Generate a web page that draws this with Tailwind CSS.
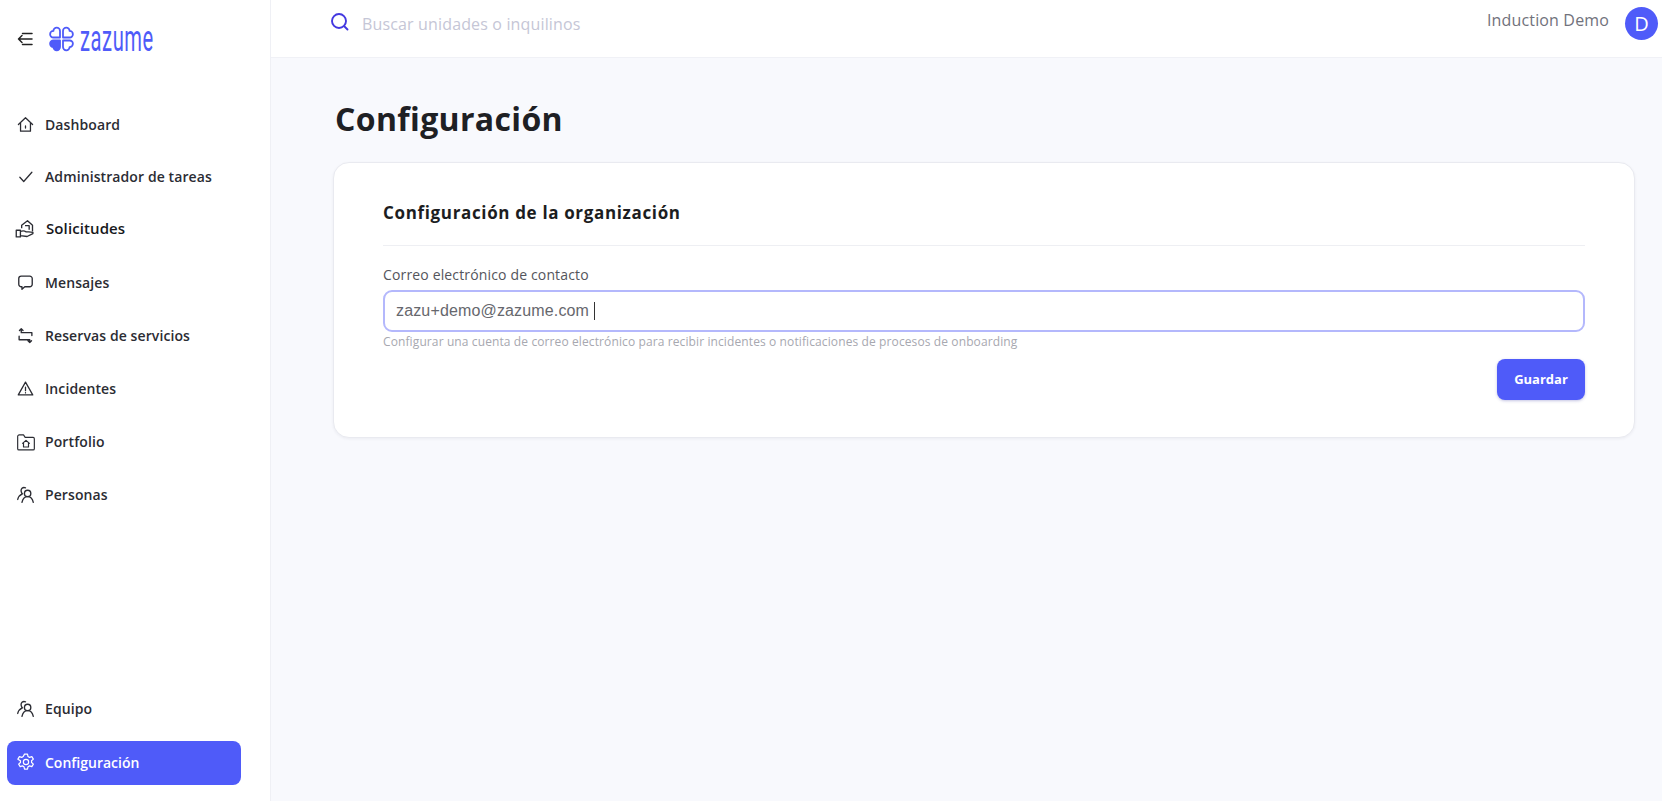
<!DOCTYPE html>
<html lang="es">
<head>
    <meta charset="UTF-8">
    <meta name="viewport" content="width=device-width, initial-scale=1.0">
    <title>Configuración</title>
    <script src="https://cdn.jsdelivr.net/npm/@tailwindcss/browser@4"></script>
</head>
<body class="flex h-[801px] overflow-hidden bg-[#f8f9fd] font-['Open_Sans',sans-serif] text-[#1f2024]">
    <!-- sidebar -->
    <aside class="flex h-full w-[271px] shrink-0 flex-col border-r border-[#eff0f5] bg-white pb-[16px]">
        <div class="flex h-[78px] items-center pl-[17px]">
            <svg class="h-[16px] w-[16px]" viewBox="0 0 16 16" fill="none" stroke="#222" stroke-width="1.500" stroke-linecap="round" stroke-linejoin="round">
                <path d="M5.500 2.500h9.500M1.500 8h13.500M5.500 13.500h9.500M5 4.500 1.500 8 5 11.500"/>
            </svg>
            <svg class="ml-[15px] h-[28px] w-[27px]" viewBox="0 0 27 28" fill="none" stroke="#4f5bf9" stroke-width="1.800" stroke-linejoin="round">
                <path d="M12 12.500H5.400a3.300 3.300 0 0 1 0-6.600 3.300 3.300 0 0 1 6.600 0z"/>
                <path d="M12 12.500H5.400a3.300 3.300 0 0 1 0-6.600 3.300 3.300 0 0 1 6.600 0z" transform="matrix(-1 0 0 1 27 0)"/>
                <path d="M12 12.500H5.400a3.300 3.300 0 0 1 0-6.600 3.300 3.300 0 0 1 6.600 0z" transform="matrix(-1 0 0 -1 27 28)"/>
                <path fill="#4f5bf9" d="M12 12.500H5.400a3.300 3.300 0 0 1 0-6.600 3.300 3.300 0 0 1 6.600 0z" transform="matrix(1 0 0 -1 0 28)"/>
            </svg>
            <span class="ml-[5px] origin-left scale-x-[0.56] font-['Roboto',sans-serif] text-[36px] leading-none tracking-[1px] text-[#4f5bf9]">zazume</span>
        </div>
        <nav class="mt-[19px] flex flex-col text-[14px] font-[560] tracking-[0.1px] text-[#2b2c33]">
            <a class="flex h-[53px] items-center gap-[11px] pt-[1px] pl-[17px]" href="#">
                <svg class="h-[17px] w-[17px]" viewBox="0 0 24 24" fill="none" stroke="#2b2c33" stroke-width="1.800" stroke-linejoin="round" stroke-linecap="round"><path d="M2 12 12 2.500 22 12M5 9.500V21.500h14V9.500M12 14v3"/></svg>
                <span>Dashboard</span>
            </a>
            <a class="flex h-[53px] items-center gap-[11px] pl-[17px]" href="#">
                <svg class="h-[17px] w-[17px]" viewBox="0 0 24 24" fill="none" stroke="#2b2c33" stroke-width="1.800" stroke-linecap="round" stroke-linejoin="round"><path d="m4 13 5.500 6L21 6"/></svg>
                <span>Administrador de tareas</span>
            </a>
            <a class="flex h-[53px] items-center gap-[11px] pb-[2px] pl-[15px] text-[15px] text-[#17181c]" href="#">
                <svg class="h-[20px] w-[20px]" viewBox="0 0 24 24" fill="none" stroke="#2b2c33" stroke-width="1.600" stroke-linejoin="round"><path d="M8 11V7.500L15 2l6 5.500V15M12 8h5v5"/><path d="M1.500 13.500h5v8h-5zM6.500 15c3-1.500 5-1 7 .5h3l5 .5v1.500l-7 3.500-8-1"/></svg>
                <span>Solicitudes</span>
            </a>
            <a class="flex h-[53px] items-center gap-[11px] pl-[17px]" href="#">
                <svg class="h-[17px] w-[17px]" viewBox="0 0 24 24" fill="none" stroke="#2b2c33" stroke-width="1.900" stroke-linejoin="round"><path d="M6 3h12a3.500 3.500 0 0 1 3.500 3.500v8A3.500 3.500 0 0 1 18 18h-7l-4 3.500V18H6a3.500 3.500 0 0 1-3.500-3.500v-8A3.500 3.500 0 0 1 6 3z"/></svg>
                <span>Mensajes</span>
            </a>
            <a class="flex h-[53px] items-center gap-[11px] pl-[17px]" href="#">
                <svg class="h-[17px] w-[17px]" viewBox="0 0 24 24" fill="none" stroke="#2b2c33" stroke-width="1.900" stroke-linecap="round" stroke-linejoin="round"><path d="M6 2.500V8h15v4M3.500 5 6 2.500 8.500 5M3 13v5h15v4M15.500 19.500 18 22l2.500-2.500"/></svg>
                <span>Reservas de servicios</span>
            </a>
            <a class="flex h-[53px] items-center gap-[11px] pl-[17px]" href="#">
                <svg class="h-[17px] w-[17px]" viewBox="0 0 24 24" fill="none" stroke="#2b2c33" stroke-width="1.800" stroke-linecap="round" stroke-linejoin="round"><path d="M12 3 1.800 21h20.400zM12 10v5M12 18v.2"/></svg>
                <span>Incidentes</span>
            </a>
            <a class="flex h-[53px] items-center gap-[9px] pl-[16px]" href="#">
                <svg class="h-[20px] w-[20px]" viewBox="0 0 24 24" fill="none" stroke="#2b2c33" stroke-width="1.400" stroke-linejoin="round"><path d="M2 5.500A2 2 0 0 1 4 3.500h5l2 3h9.500a1.500 1.500 0 0 1 1.500 1.500v12a1.500 1.500 0 0 1-1.500 1.500h-17A1.500 1.500 0 0 1 2 20z"/><path d="m7.500 14 4.500-4 4.500 4M9 13v5h6v-5"/></svg>
                <span>Portfolio</span>
            </a>
            <a class="flex h-[53px] items-center gap-[11px] pl-[17px]" href="#">
                <svg class="h-[17px] w-[17px]" viewBox="0 0 24 24" fill="none" stroke="#2b2c33" stroke-width="1.900" stroke-linecap="round"><circle cx="15" cy="10.500" r="4.500"/><path d="M7 23c1-4.500 4-8 8-8s7 3.500 8 8M12 2.500C8 1 5 4 6 8c.3 1.500 1 2.500 1.500 3C4 12.500 2 15 1 19"/></svg>
                <span>Personas</span>
            </a>
        </nav>
        <div class="mt-auto flex flex-col text-[14px] font-[560] tracking-[0.1px] text-[#2b2c33]">
            <a class="mb-[10px] flex h-[44px] items-center gap-[11px] pb-[2px] pl-[17px]" href="#">
                <svg class="h-[17px] w-[17px]" viewBox="0 0 24 24" fill="none" stroke="#2b2c33" stroke-width="1.900" stroke-linecap="round"><circle cx="15" cy="10.500" r="4.500"/><path d="M7 23c1-4.500 4-8 8-8s7 3.500 8 8M12 2.500C8 1 5 4 6 8c.3 1.500 1 2.500 1.500 3C4 12.500 2 15 1 19"/></svg>
                <span>Equipo</span>
            </a>
            <a class="mx-[7px] flex h-[44px] w-[234px] items-center gap-[10px] rounded-[8px] bg-[#4f5bf9] pb-[2px] pl-[10px] font-semibold tracking-normal text-white" href="#">
                <svg class="h-[18px] w-[18px]" viewBox="0 0 24 24" fill="none" stroke="#fff" stroke-width="1.600" stroke-linejoin="round"><circle cx="12" cy="12" r="3.500"/><path d="M10 1.500h4l.7 3.200 2 1.100 3.100-1 2 3.400-2.400 2.200v2.200l2.400 2.200-2 3.400-3.100-1-2 1.100-.7 3.200h-4l-.7-3.200-2-1.100-3.100 1-2-3.400 2.400-2.200v-2.200L1.200 8.200l2-3.400 3.100 1 2-1.100z"/></svg>
                <span>Configuración</span>
            </a>
        </div>
    </aside>

    <div class="flex min-w-0 flex-1 flex-col">
        <!-- top bar -->
        <header class="flex h-[58px] shrink-0 items-start border-b border-[#f0f1f6] bg-white pr-[4px] pl-[59px]">
            <svg class="mt-[12px] h-[20px] w-[20px]" viewBox="0 0 20 20" fill="none" stroke="#4338e0" stroke-width="1.900" stroke-linecap="round"><circle cx="9" cy="9" r="7"/><path d="m14.500 14.500 3 3"/></svg>
            <span class="mt-[13px] ml-[12px] text-[16px] leading-[22px] tracking-[0.15px] text-[#c5c6d6]">Buscar unidades o inquilinos</span>
            <span class="mt-[9px] ml-auto text-[16px] leading-[22px] tracking-[0.15px] text-[#71727c]">Induction Demo</span>
            <span class="mt-[7px] ml-[16px] flex h-[33px] w-[33px] items-center justify-center rounded-full bg-[#4f5bf9] text-[20px] text-white">D</span>
        </header>

        <!-- content -->
        <main class="pt-[39px] pr-[27px] pl-[62px]">
            <h1 class="ml-[2px] text-[32px] leading-[44px] font-bold tracking-[0.35px] text-[#1e2024]">Configuración</h1>
            <section class="mt-[21px] h-[276px] rounded-[16px] border border-[#e9eaf0] bg-white px-[49px] pt-[38px] shadow-[0_1px_3px_rgba(30,30,60,0.06)]">
                <h2 class="border-b border-[#eeeff3] pb-[20px] text-[17px] leading-[24px] font-bold tracking-[0.65px] text-[#1c1d21]">Configuración de la organización</h2>
                <p class="mt-[19px] text-[14px] leading-[20px] tracking-[0.15px] text-[#54555c]">Correo electrónico de contacto</p>
                <div class="mt-[5px] flex h-[42px] items-center rounded-[9px] border-2 border-[#b4b8fc] pl-[11px] font-['Liberation_Sans',sans-serif] text-[16px] tracking-[0.15px] text-[#66676d]">
                    <span>zazu+demo@zazume.com</span>
                    <span class="ml-[5px] h-[18px] w-px bg-[#333]"></span>
                </div>
                <p class="mt-[1px] text-[12px] leading-[18px] tracking-[0.11px] text-[#a7a8b0]">Configurar una cuenta de correo electrónico para recibir incidentes o notificaciones de procesos de onboarding</p>
                <div class="mt-[8px] flex justify-end">
                    <button class="h-[41px] w-[88px] rounded-[8px] bg-[#4f5bf9] text-[13px] font-bold text-white shadow-[0_1px_3px_rgba(60,60,160,0.3)]">Guardar</button>
                </div>
            </section>
        </main>
    </div>
</body>
</html>
